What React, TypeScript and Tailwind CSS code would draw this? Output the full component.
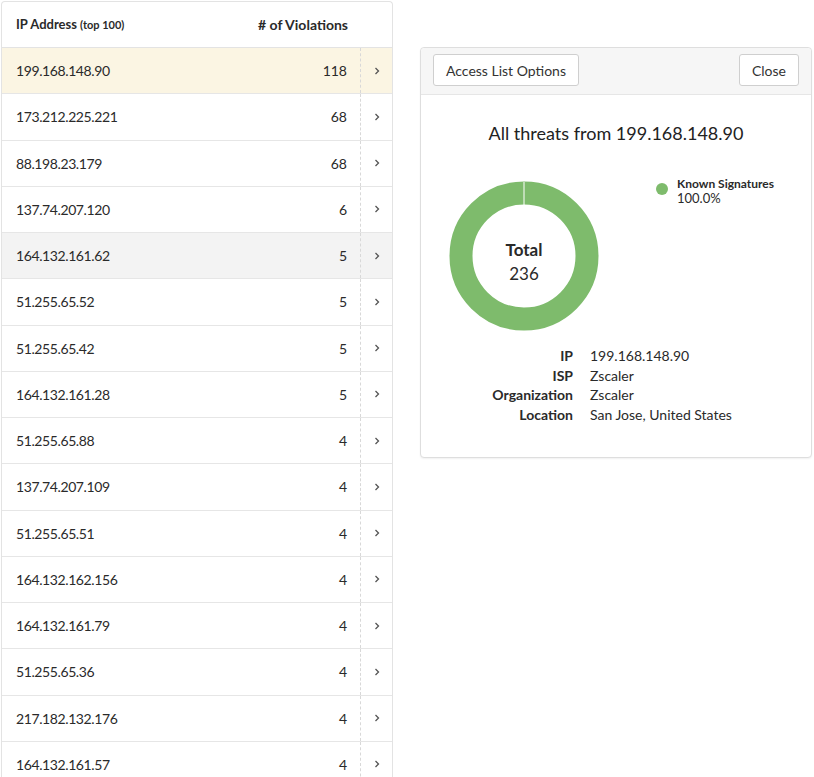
import React from "react";

const rows = [
  { ip: "199.168.148.90", count: 118 },
  { ip: "173.212.225.221", count: 68 },
  { ip: "88.198.23.179", count: 68 },
  { ip: "137.74.207.120", count: 6 },
  { ip: "164.132.161.62", count: 5 },
  { ip: "51.255.65.52", count: 5 },
  { ip: "51.255.65.42", count: 5 },
  { ip: "164.132.161.28", count: 5 },
  { ip: "51.255.65.88", count: 4 },
  { ip: "137.74.207.109", count: 4 },
  { ip: "51.255.65.51", count: 4 },
  { ip: "164.132.162.156", count: 4 },
  { ip: "164.132.161.79", count: 4 },
  { ip: "51.255.65.36", count: 4 },
  { ip: "217.182.132.176", count: 4 },
  { ip: "164.132.161.57", count: 4 },
];

const details = [
  { label: "IP", value: "199.168.148.90" },
  { label: "ISP", value: "Zscaler" },
  { label: "Organization", value: "Zscaler" },
  { label: "Location", value: "San Jose, United States" },
];

const Chevron = () => (
  <svg width="8" height="10" viewBox="0 0 8 10" fill="none">
    <path d="M2.5 2 L5.5 5 L2.5 8" stroke="#555" strokeWidth="1.3" />
  </svg>
);

const App: React.FC = () => {
  return (
    <div
      className="w-[814px] h-[777px] overflow-hidden bg-white flex text-[#2a2a2a]"
      style={{ fontFamily: "Lato, 'Open Sans', sans-serif" }}
    >
      {/* TABLE */}
      <div className="ml-px mt-px w-[392px] shrink-0 border border-b-0 border-[#e3e3e3] rounded-t-[4px] bg-white">
        <div className="h-[46px] flex items-center border-b border-[#e3e3e3]">
          <div className="flex-1 pl-[14px] text-[13px] font-bold">
            IP Address <span className="text-[11px]">(top 100)</span>
          </div>
          <div className="pr-[44px] text-[14px] font-bold"># of Violations</div>
        </div>
        {rows.map((r, i) => (
          <div
            key={r.ip}
            className={`h-[46.25px] flex items-center border-b border-[#e6e6e6] text-[14px] ${
              i === 0 ? "bg-[#fbf5e3]" : i === 4 ? "bg-[#f3f3f3]" : "bg-white"
            }`}
          >
            <div className="flex-1 pl-[14px] tracking-[-0.4px]">{r.ip}</div>
            <div className="pr-[13px]">{r.count}</div>
            <div className="w-[32px] h-full flex items-center justify-center border-l border-dashed border-[#d8d8d8]">
              <Chevron />
            </div>
          </div>
        ))}
      </div>

      {/* DETAIL PANEL */}
      <div className="ml-[27px] mt-[47px] w-[392px] h-[411px] border border-[#dedede] rounded-[4px] shadow-[0_1px_2px_rgba(0,0,0,0.06)] bg-white">
        <div className="h-[47px] bg-[#f6f6f6] border-b border-[#e6e6e6] rounded-t-[4px] flex items-start justify-between px-[12px] pt-[6px]">
          <button className="h-[32px] px-[12px] bg-white border border-[#cfcfcf] rounded-[3px] text-[14px] text-[#333]">
            Access List Options
          </button>
          <button className="h-[32px] px-[12px] bg-white border border-[#cfcfcf] rounded-[3px] text-[14px] text-[#333]">
            Close
          </button>
        </div>

        <div className="pt-[25px] text-center text-[18px] text-[#222]">
          All threats from 199.168.148.90
        </div>

        <div className="flex mt-[34px]">
          <div className="ml-[28px] relative w-[150px] h-[150px] shrink-0">
            <svg width="150" height="150" viewBox="0 0 150 150">
              <circle cx="75" cy="75" r="63" fill="none" stroke="#7ebb6c" strokeWidth="23" />
              <line x1="75" y1="1" x2="75" y2="24" stroke="#ffffff" strokeWidth="1" />
            </svg>
            <div className="absolute inset-0 pt-[13px] flex flex-col items-center justify-center">
              <div className="text-[17px] font-bold leading-[22px]">Total</div>
              <div className="text-[17px] leading-[26px]">236</div>
            </div>
          </div>
          <div className="ml-[57px] -mt-[4px] flex items-start gap-[9px]">
            <div className="mt-[6px] w-[12px] h-[12px] rounded-full bg-[#7ebb6c]" />
            <div className="leading-[14px]">
              <div className="text-[12px] font-bold">Known Signatures</div>
              <div className="text-[13px]">100.0%</div>
            </div>
          </div>
        </div>

        <div className="mt-[15px] grid grid-cols-[152px_1fr] gap-x-[17px] text-[14px] leading-[19.5px]">
          {details.map((d) => (
            <React.Fragment key={d.label}>
              <div className="text-right font-bold">{d.label}</div>
              <div>{d.value}</div>
            </React.Fragment>
          ))}
        </div>
      </div>
    </div>
  );
};

export default App;
